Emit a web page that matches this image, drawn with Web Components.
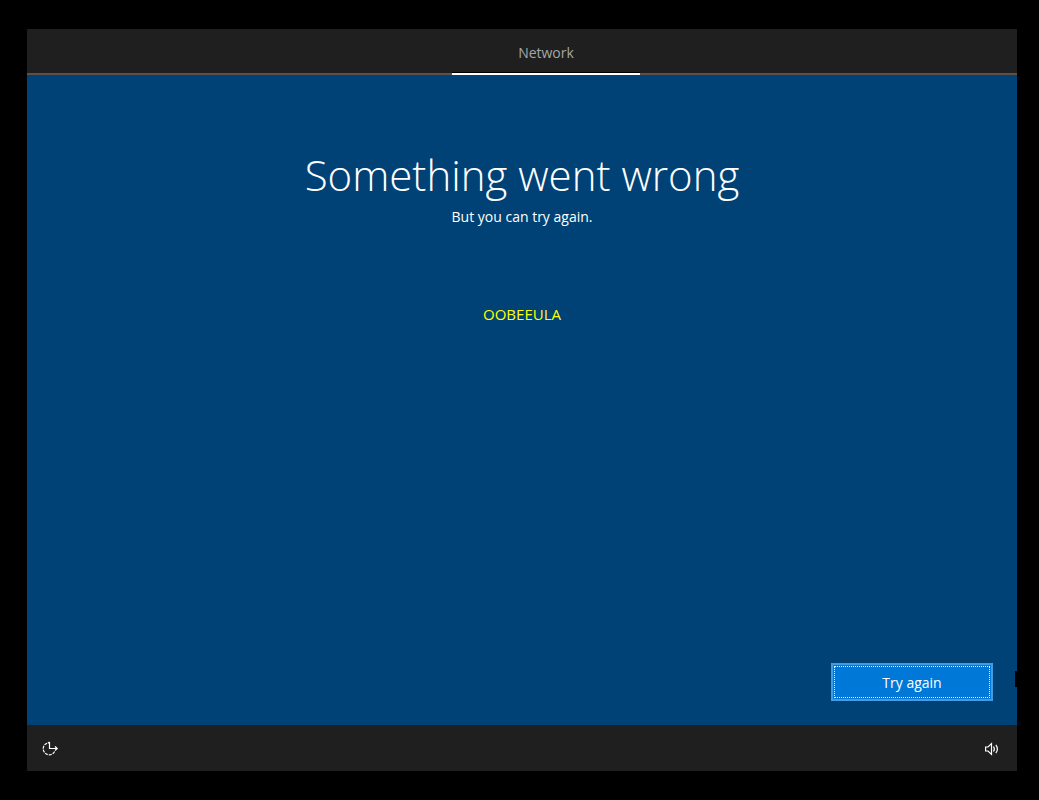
<!DOCTYPE html>
<html lang="en">
<head>
<meta charset="utf-8">
<meta name="viewport" content="width=device-width, initial-scale=1">
<title>Network setup</title>
<style>
html, body { margin: 0; background: #000; }
body { font-family: "Open Sans", "Noto Sans", sans-serif; font-size: 14px; line-height: 20px; color: #fff; }
</style>
</head>
<body>
<setup-screen>
  <setup-tabs slot="header">Network</setup-tabs>
  <error-message heading="Something went wrong" code="OOBEEULA">But you can try again.</error-message>
  <action-button slot="action">Try again</action-button>
  <setup-footer slot="footer"></setup-footer>
</setup-screen>
<script>
function define(name, markup, setup) {
  customElements.define(name, class extends HTMLElement {
    constructor() {
      super();
      this.attachShadow({ mode: "open" }).innerHTML = markup;
    }
    connectedCallback() {
      if (setup) setup(this, this.shadowRoot);
    }
  });
}

define("setup-screen", `
<style>
:host { display: flex; box-sizing: border-box; min-height: 100vh; padding: 29px 22px 29px 27px; }
.panel { flex: 1; display: flex; flex-direction: column; position: relative; background: #004275; }
main { flex: 1; padding-top: 70px; }
.actions { display: flex; justify-content: flex-end; padding: 24px; }
.handle { position: absolute; right: 0; bottom: 84px; width: 2px; height: 16px; background: #000; }
</style>
<div class="panel">
  <slot name="header"></slot>
  <main><slot></slot></main>
  <div class="actions"><slot name="action"></slot></div>
  <slot name="footer"></slot>
  <span class="handle"></span>
</div>`);

define("setup-tabs", `
<style>
:host { display: block; }
nav { display: flex; justify-content: center; padding-left: 48px; background: #1f1f1f; box-shadow: inset 0 -2px #5c504a; }
a { box-sizing: border-box; width: 188px; height: 46px; line-height: 20px; padding-top: 14px; border-bottom: 2px solid #fff; box-shadow: inset 0 -1px #000; text-align: center; text-decoration: none; color: #a6a6a6; }
</style>
<nav><a href="#network" aria-current="step"><slot></slot></a></nav>`);

define("error-message", `
<style>
:host { display: block; text-align: center; }
h1 { margin: 0 0 2px; font-size: 42px; line-height: 60px; font-weight: 300; }
p { margin: 0; }
.code { margin-top: 77px; font-size: 15px; color: #ff0; }
</style>
<h1></h1>
<p><slot></slot></p>
<p class="code"></p>`, (host, root) => {
  root.querySelector("h1").textContent = host.getAttribute("heading");
  root.querySelector(".code").textContent = host.getAttribute("code");
});

define("action-button", `
<style>
:host { display: block; }
button { display: block; box-sizing: border-box; width: 162px; height: 38px; padding: 1px; border: 2px solid #429ce3; background: #0078d7; color: #fff; font: inherit; }
span { display: flex; box-sizing: border-box; height: 100%; padding-top: 2px; align-items: center; justify-content: center; border: 1px dotted #fff; }
</style>
<button type="button"><span><slot></slot></span></button>`);

define("setup-footer", `
<style>
:host { display: flex; align-items: center; justify-content: space-between; box-sizing: border-box; height: 46px; padding: 2px 17px 0 14px; background: #1f1f1f; }
button { display: block; padding: 0; border: 0; background: none; color: #fff; }
svg { display: block; fill: none; stroke: currentColor; }
</style>
<button type="button" aria-label="Ease of access">
  <svg width="18" height="18" viewBox="0 0 18 18" stroke-width="1.2">
    <path d="M8.5 2V8.5H16M14 6.5L16.2 8.5L14 10.5M6.8 3.2L8.5 2"/>
    <path d="M6 3.2A6 6 0 1 0 13.6 11.4" stroke-dasharray="3 1"/>
  </svg>
</button>
<button type="button" aria-label="Volume">
  <svg width="16" height="16" viewBox="0 0 16 16" stroke-width="1.2">
    <path d="M1.6 6H4L7.5 2.6V13.4L4 10H1.6Z"/>
    <path d="M9.5 5.5Q11.2 8 9.5 10.5M11.8 3.8Q15 8 11.8 12.2"/>
  </svg>
</button>`);
</script>
</body>
</html>
